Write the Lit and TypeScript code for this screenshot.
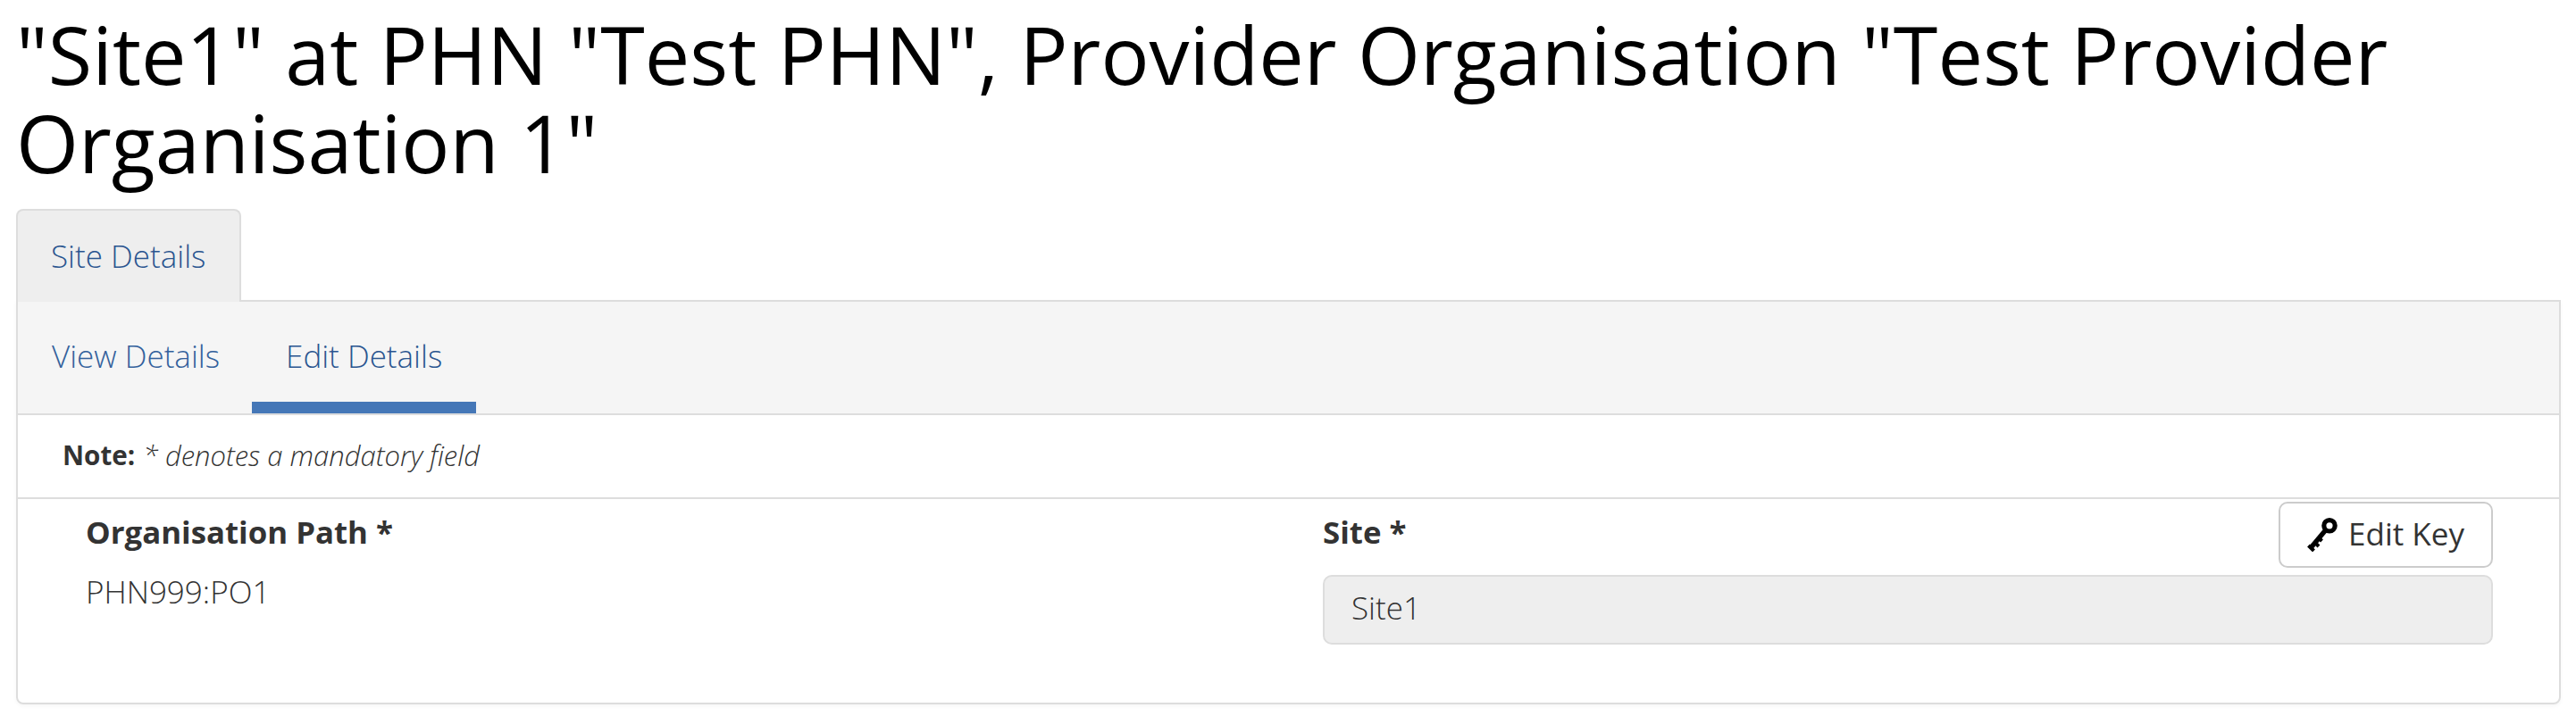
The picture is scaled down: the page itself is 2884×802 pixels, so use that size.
import { LitElement, html, css } from "lit";
import { customElement } from "lit/decorators.js";

@customElement("app-root")
export class AppRoot extends LitElement {
  static styles = css`
    :host { display: block; font-family: "Open Sans", sans-serif; color: #333; padding: 11px 17px 13px 18px; box-sizing: border-box; background: #fff; font-size: 35px; font-weight: 300; }
    h1 { margin: 0 0 25px; font-size: 90px; line-height: 99px; font-weight: 400; color: #000; }
    .tabs { display: flex; }
    .tab { width: 252px; height: 104px; box-sizing: border-box; background: #eee; border: 2px solid #ddd; border-bottom: none; border-radius: 8px 8px 0 0; padding: 0 38px 2px 37px; color: #2a5590; display: flex; align-items: center; white-space: nowrap; margin-bottom: -2px; position: relative; z-index: 1; }
    .panel { border: 2px solid #ddd; border-radius: 0 0 8px 8px; height: 453px; box-sizing: border-box; box-shadow: 0 2px 4px rgba(0,0,0,.04); }
    .subnav { display: flex; height: 127px; box-sizing: border-box; background: #f5f5f5; border-bottom: 2px solid #ddd; }
    .subnav a { padding: 0 36px 4px 38px; display: flex; align-items: center; color: #33619c; height: 125px; box-sizing: border-box; }
    .subnav a.active { color: #2a5590; border-bottom: 13px solid #4577b7; padding: 9px 38px 0; }
    .note { height: 94px; box-sizing: border-box; border-bottom: 2px solid #ddd; padding: 0 0 3px 50px; display: flex; align-items: center; gap: 9px; }
    .note b { font-weight: 700; font-size: 29.6px; }
    .note i { font-style: italic; font-size: 31px; }
    .form { display: grid; grid-template-columns: 1fr 1310px; column-gap: 75px; padding: 3px 74px 0 76px; }
    .label { font-weight: 700; line-height: 48px; padding-top: 10px; display: block; font-size: 34.8px; }
    .value { line-height: 48px; margin-top: 19px; }
    .head { display: flex; justify-content: space-between; align-items: flex-start; }
    button { display: flex; align-items: center; gap: 12px; height: 74px; width: 240px; box-sizing: border-box; justify-content: center; background: #fff; border: 2px solid #ccc; border-radius: 10px; font: 400 35px "Open Sans", sans-serif; color: #333; padding: 0 0 4px; }
    button svg { width: 34px; height: 38px; display: block; margin-top: 4px; }
    .input { margin-top: 8px; height: 78px; box-sizing: border-box; background: #eee; border: 2px solid #ddd; border-radius: 10px; padding: 0 30px 5px; display: flex; align-items: center; }
  `;
  render() {
    return html`
      <h1>"Site1" at PHN "Test PHN", Provider Organisation "Test Provider Organisation 1"</h1>
      <div class="tabs"><div class="tab">Site Details</div></div>
      <div class="panel">
        <div class="subnav"><a>View Details</a><a class="active">Edit Details</a></div>
        <div class="note"><b>Note:</b><i>* denotes a mandatory field</i></div>
        <div class="form">
          <div><span class="label">Organisation Path *</span><div class="value">PHN999:PO1</div></div>
          <div>
            <div class="head"><span class="label">Site *</span>
              <button><svg viewBox="0 0 34 38" fill="none"><circle cx="25" cy="8.8" r="6.2" stroke="#000" stroke-width="5.2"/><path d="M20.5 14 5 32.5" stroke="#000" stroke-width="5.4"/><path d="M1.5 31 7.5 37M7.5 26.5l5.5 5.5M12 21.5l4.5 4.5" stroke="#000" stroke-width="4"/></svg>Edit Key</button></div>
            <div class="input">Site1</div>
          </div>
        </div>
      </div>
    `;
  }
}
